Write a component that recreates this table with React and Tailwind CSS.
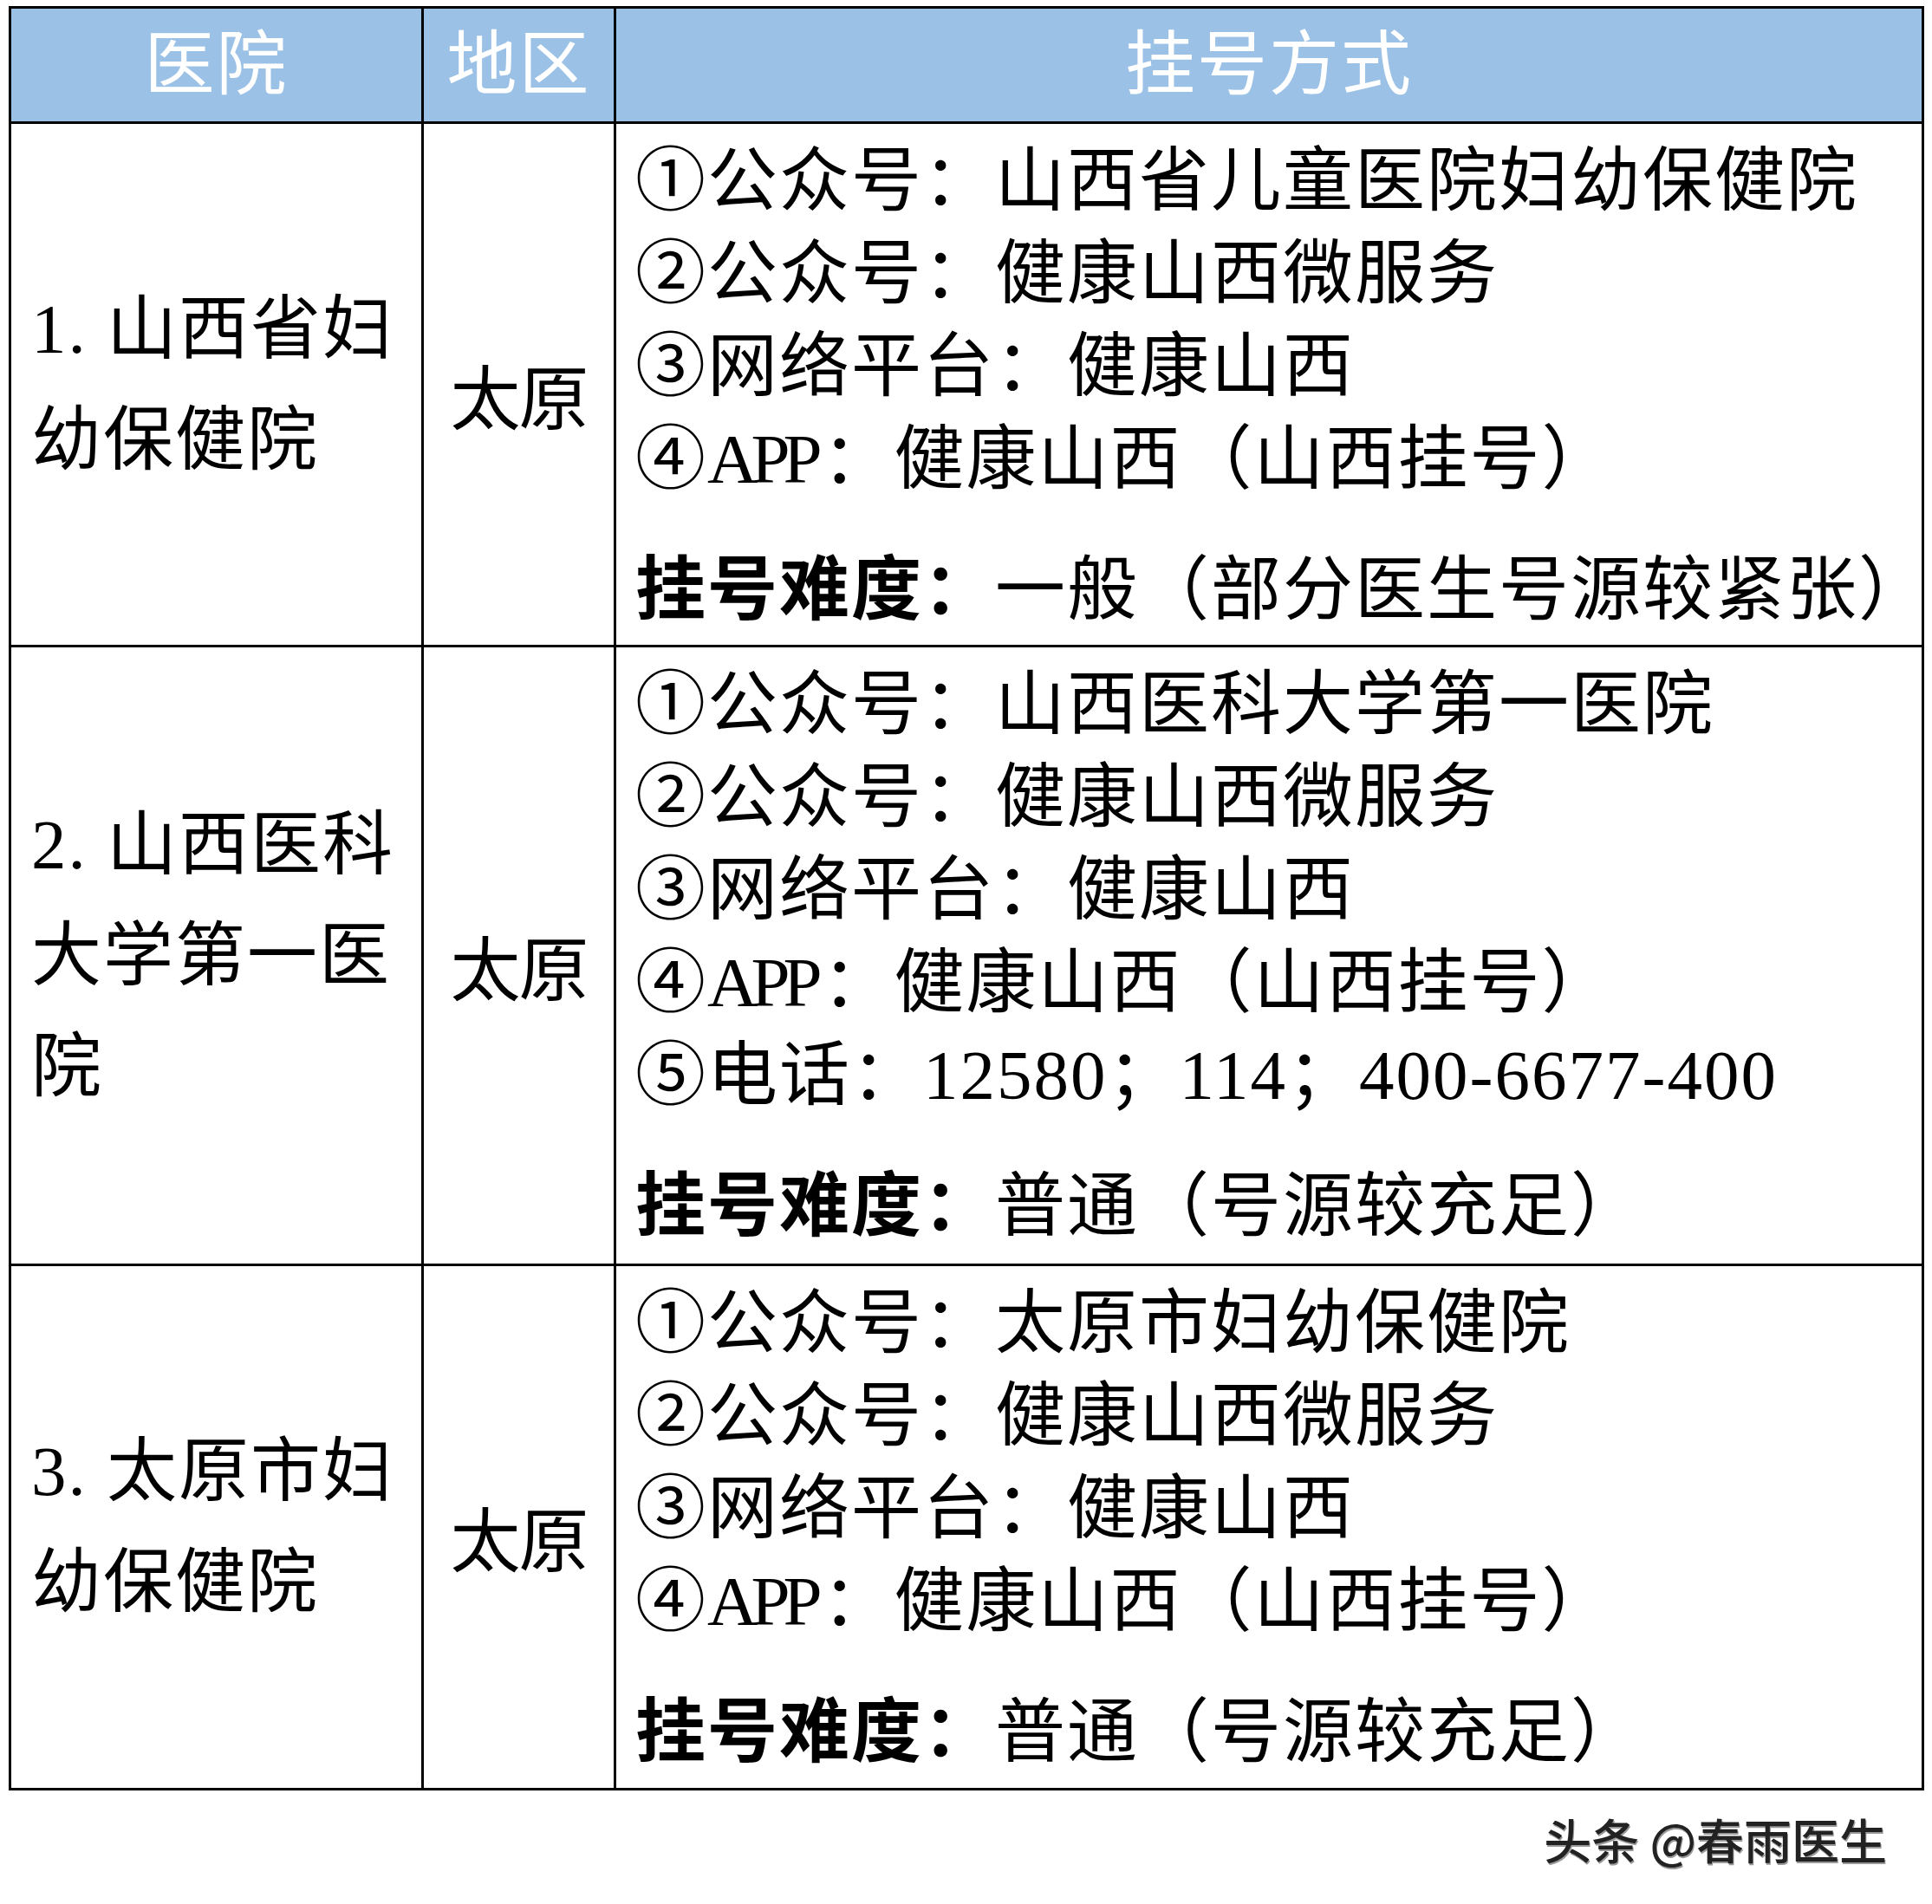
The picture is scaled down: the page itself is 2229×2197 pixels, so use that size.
import React from "react";

const FONT = { fontFamily: "'Liberation Serif', 'Noto Sans CJK SC', serif" };

const rows = [
  {
    name: ["1. 山西省妇", "幼保健院"],
    area: "太原",
    h: "h-[604px]",
    ways: [
      "①公众号：山西省儿童医院妇幼保健院",
      "②公众号：健康山西微服务",
      "③网络平台：健康山西",
      "④APP：健康山西（山西挂号）",
    ],
    level: "一般（部分医生号源较紧张）",
  },
  {
    name: ["2. 山西医科", "大学第一医", "院"],
    area: "太原",
    h: "h-[714px]",
    ways: [
      "①公众号：山西医科大学第一医院",
      "②公众号：健康山西微服务",
      "③网络平台：健康山西",
      "④APP：健康山西（山西挂号）",
      "⑤电话：12580；114；400-6677-400",
    ],
    level: "普通（号源较充足）",
  },
  {
    name: ["3. 太原市妇", "幼保健院"],
    area: "太原",
    h: "h-[602px]",
    ways: [
      "①公众号：太原市妇幼保健院",
      "②公众号：健康山西微服务",
      "③网络平台：健康山西",
      "④APP：健康山西（山西挂号）",
    ],
    level: "普通（号源较充足）",
  },
];

// "APP" is half-width in the source font, so squeeze it a bit
const WayLine = ({ text }) => {
  const parts = text.split("APP");
  if (parts.length === 1) return <div>{text}</div>;
  return (
    <div>
      {parts[0]}
      <span className="tracking-[-8px]">APP</span>
      <span className="ml-[8px]">{parts[1]}</span>
    </div>
  );
};

const App = () => {
  return (
    <div className="w-[2229px] h-[2197px] bg-white pt-[7px] pl-[10px] text-black" style={FONT}>
      <div className="w-[2210px] border-[3px] border-black">
        <div className="flex h-[133px] bg-[#9BC2E6] border-b-[3px] border-black text-white text-[81px] leading-none tracking-[2px]">
          <div className="w-[476px] shrink-0 border-r-[3px] border-black flex items-center justify-center">医院</div>
          <div className="w-[222px] shrink-0 border-r-[3px] border-black flex items-center justify-center">地区</div>
          <div className="flex-1 min-w-0 flex items-center justify-center">挂号方式</div>
        </div>

        {rows.map((row, index) => (
          <div
            key={index}
            className={`flex ${row.h} ${index < rows.length - 1 ? "border-b-[3px] border-black" : ""}`}
          >
            <div className="w-[476px] shrink-0 border-r-[3px] border-black flex flex-col justify-center pl-[23px] text-[81px] leading-[128px] tracking-[2px] whitespace-nowrap">
              {row.name.map((line, i) => (
                <div key={i}>{line}</div>
              ))}
            </div>
            <div className="w-[222px] shrink-0 border-r-[3px] border-black flex items-center justify-center pt-[37px] text-[81px] leading-none tracking-[-2px]">
              {row.area}
            </div>
            <div className="flex-1 min-w-0 pl-[22px] pt-[13px] text-[81px] leading-[107px] tracking-[2px] whitespace-nowrap">
              {row.ways.map((line, i) => (
                <WayLine key={i} text={line} />
              ))}
              <div className="mt-[44px]">
                <span className="font-bold">挂号难度：</span>
                {row.level}
              </div>
            </div>
          </div>
        ))}
      </div>

      <div className="flex justify-end pr-[52px] mt-[28px]">
        <span
          className="text-[55px] leading-none text-[#222] font-medium"
          style={{ fontFamily: "'Noto Sans CJK SC', sans-serif", textShadow: "1px 2px 0 #999" }}
        >
          头条 @春雨医生
        </span>
      </div>
    </div>
  );
};

export default App;
